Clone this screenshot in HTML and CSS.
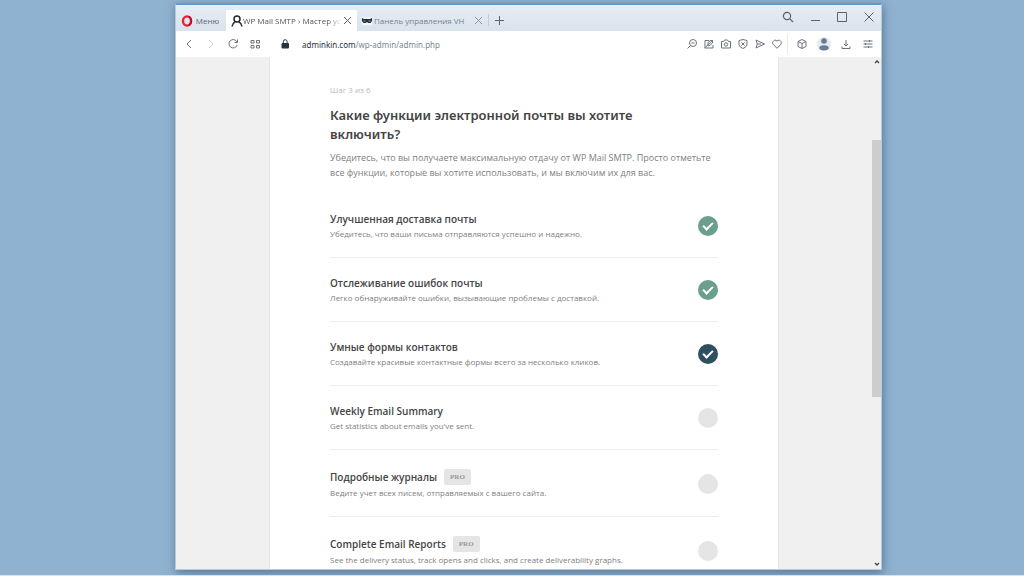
FILE: index.html
```
<!DOCTYPE html>
<html lang="ru">
<head>
<meta charset="utf-8">
<title>WP Mail SMTP › Мастер установки</title>
<link rel="stylesheet" href="styles.css">
</head>
<body>
<div class="window">
  <header class="tabbar">
    <button class="menu" type="button">
      <svg width="12" height="12" viewBox="0 0 12 12"><ellipse cx="6" cy="6" rx="4" ry="4.600" fill="none" stroke="#ee1f35" stroke-width="2.400"/><path d="M7.500 1.600c3.800 1.400 3.800 7.400 0 8.800" fill="none" stroke="#b3122a" stroke-width="1.600"/></svg>
      <span>Меню</span>
    </button>
    <div class="tab tab-active">
      <svg width="12" height="12" viewBox="0 0 12 12" fill="none" stroke="#202830" stroke-width="1.500"><circle cx="6" cy="4" r="3"/><path d="M1 11.500c.3-2.200 1.400-3.600 3.200-4.800M11 11.500c-.3-2.200-1.400-3.600-3.200-4.800"/></svg>
      <span class="tab-title fade">WP Mail SMTP › Мастер ус</span>
      <button class="close" type="button" aria-label="Закрыть"><svg width="9" height="9" viewBox="0 0 9 9" stroke="#59636d" stroke-width="1"><path d="M1 1l7 7M8 1l-7 7"/></svg></button>
    </div>
    <div class="tab tab-rest">
      <svg width="10" height="10" viewBox="0 0 10 10"><path d="M0 1h10v8H0z" fill="#f4f7fa"/><path d="M0 2l2 1h6l2-1v3L8.500 7H6.300L5 6 3.700 7H1.500L0 5z" fill="#1c3040"/><path d="M1.500 5h2M6.500 5h2" stroke="#8fb0c4"/></svg>
      <span class="tab-title">Панель управления VH</span>
      <button class="close" type="button" aria-label="Закрыть"><svg width="9" height="9" viewBox="0 0 9 9" stroke="#8b959f" stroke-width="1"><path d="M1 1l7 7M8 1l-7 7"/></svg></button>
    </div>
    <button class="new-tab" type="button" aria-label="Новая вкладка"><svg width="9" height="9" viewBox="0 0 9 9" stroke="#59636d"><path d="M4.500 0v9M0 4.500h9"/></svg></button>
    <div class="controls">
      <button type="button" aria-label="Поиск"><svg width="12" height="12" viewBox="0 0 12 12" fill="none" stroke="#59636d" stroke-width="1.200"><circle cx="5" cy="5" r="3.600"/><path d="M7.800 7.800L11 11"/></svg></button>
      <button type="button" aria-label="Свернуть"><svg width="12" height="12" viewBox="0 0 12 12" stroke="#59636d"><path d="M2 9.500h9"/></svg></button>
      <button type="button" aria-label="Развернуть"><svg width="12" height="12" viewBox="0 0 12 12" fill="none" stroke="#59636d"><path d="M1.500 1.500h9v9h-9z"/></svg></button>
      <button type="button" aria-label="Закрыть окно"><svg width="12" height="12" viewBox="0 0 12 12" stroke="#59636d"><path d="M1.500 1.500l9 9M10.500 1.500l-9 9"/></svg></button>
    </div>
  </header>

  <nav class="toolbar">
    <div class="nav-buttons">
      <button type="button" aria-label="Назад"><svg width="12" height="12" viewBox="0 0 12 12"><path d="M8 2L4 6l4 4"/></svg></button>
      <button type="button" aria-label="Вперёд" disabled><svg width="12" height="12" viewBox="0 0 12 12"><path d="M4 2l4 4-4 4"/></svg></button>
      <button type="button" aria-label="Обновить"><svg width="12" height="12" viewBox="0 0 12 12"><path d="M10 4A4.200 4.200 0 1 0 10.200 7M10.500 1.500v3h-3"/></svg></button>
      <button type="button" aria-label="Экспресс-панель"><svg width="12" height="12" viewBox="0 0 12 12"><path d="M2 2.500h3v2.500H2zM7.500 2.500h3v2.500h-3zM2 7.500h3V10H2zM7.500 7.500h3V10h-3z"/></svg></button>
    </div>
    <svg class="lock" width="8" height="10" viewBox="0 0 8 10"><path d="M1 4.500h6.500v4.500H1z" fill="#27333d" stroke="#27333d"/><path d="M2.300 4V2.600a1.900 1.900 0 0 1 3.800 0V4" fill="none" stroke="#27333d" stroke-width="1"/></svg>
    <button class="address" type="button">adminkin.com<span class="path">/wp-admin/admin.php</span></button>
    <div class="actions">
      <button type="button" aria-label="Масштаб"><svg width="12" height="12" viewBox="0 0 12 12"><circle cx="7" cy="5" r="3.500"/><path d="M4.500 7.500L1.500 10.500M5.500 5h3"/></svg></button>
      <button type="button" aria-label="Правка"><svg width="12" height="12" viewBox="0 0 12 12"><path d="M6 2.500H2v7.500h8V7M1.500 10L10 2M5 8V4.500l3-2.500 2 2-2.500 3z"/></svg></button>
      <button type="button" aria-label="Снимок"><svg width="12" height="12" viewBox="0 0 12 12"><path d="M1.500 3.500h2l1-1.500h3l1 1.500h2v6.500h-9z"/><circle cx="6" cy="6.500" r="1.700"/></svg></button>
      <button type="button" aria-label="Блокировка"><svg width="12" height="12" viewBox="0 0 12 12"><path d="M2 2.500q4-2 8 0V7q-1 2.500-4 3.500Q3 9.500 2 7zM4.500 4.500l3 3M7.500 4.500l-3 3"/></svg></button>
      <button type="button" aria-label="Отправить"><svg width="12" height="12" viewBox="0 0 12 12"><path d="M2 2l8.500 4L2 10l1.300-4zM3.500 6H7"/></svg></button>
      <button type="button" aria-label="Избранное"><svg width="12" height="12" viewBox="0 0 12 12"><path d="M6 10.300L2.300 6.500C.2 3.800 4 .4 6 3.200 8 .4 11.800 3.800 9.700 6.500z"/></svg></button>
    </div>
    <div class="extras">
      <button type="button" aria-label="Расширения"><svg width="12" height="12" viewBox="0 0 12 12"><path d="M6 1.500l4 2v5l-4 2-4-2v-5zM2 3.500l4 2 4-2M6 5.500v5"/></svg></button>
      <button type="button" aria-label="Профиль"><svg width="14" height="14" viewBox="0 0 14 14"><circle cx="7" cy="7" r="7" fill="#e3eaf1" stroke="none"/><circle cx="7" cy="4" r="2.800" fill="#687d92" stroke="none"/><ellipse cx="7" cy="10.800" rx="4.700" ry="2.600" fill="#687d92" stroke="none"/></svg></button>
      <button type="button" aria-label="Загрузки"><svg width="12" height="12" viewBox="0 0 12 12"><path d="M6 2v6M4 6l2 2 2-2M2 8.500v2h8v-2"/></svg></button>
      <button type="button" aria-label="Настройка"><svg width="12" height="12" viewBox="0 0 12 12"><path d="M1.500 3h9M1.500 6h9M1.500 9h9M7.500 2v2M3.500 5v2M6.500 8v2"/></svg></button>
    </div>
  </nav>

  <div class="viewport">
    <main class="card">
      <p class="step">Шаг 3 из 6</p>
      <h1>Какие функции электронной почты вы хотите включить?</h1>
      <p class="intro">Убедитесь, что вы получаете максимальную отдачу от WP Mail SMTP. Просто отметьте все функции, которые вы хотите использовать, и мы включим их для вас.</p>
      <form class="features">
        <label class="feature">
          <span class="text"><span class="name">Улучшенная доставка почты</span><span class="about">Убедитесь, что ваши письма отправляются успешно и надежно.</span></span>
          <input class="check locked" type="checkbox" checked>
        </label>
        <label class="feature">
          <span class="text"><span class="name">Отслеживание ошибок почты</span><span class="about">Легко обнаруживайте ошибки, вызывающие проблемы с доставкой.</span></span>
          <input class="check locked" type="checkbox" checked>
        </label>
        <label class="feature">
          <span class="text"><span class="name">Умные формы контактов</span><span class="about">Создавайте красивые контактные формы всего за несколько кликов.</span></span>
          <input class="check" type="checkbox" checked>
        </label>
        <label class="feature">
          <span class="text"><span class="name">Weekly Email Summary</span><span class="about">Get statistics about emails you've sent.</span></span>
          <input class="check" type="checkbox">
        </label>
        <label class="feature">
          <span class="text"><span class="name with-badge">Подробные журналы <span class="pro">PRO</span></span><span class="about">Ведите учет всех писем, отправляемых с вашего сайта.</span></span>
          <input class="check" type="checkbox">
        </label>
        <label class="feature">
          <span class="text"><span class="name with-badge">Complete Email Reports <span class="pro">PRO</span></span><span class="about">See the delivery status, track opens and clicks, and create deliverability graphs.</span></span>
          <input class="check" type="checkbox">
        </label>
      </form>
    </main>
    <div class="scrollbar">
      <svg width="6" height="5" viewBox="0 0 6 5"><path d="M1 4l2-2 2 2" fill="none" stroke="#444" stroke-width="1.300"/></svg>
      <div class="track"><div class="thumb"></div></div>
      <svg width="6" height="5" viewBox="0 0 6 5"><path d="M1 1l2 2 2-2" fill="none" stroke="#444" stroke-width="1.300"/></svg>
    </div>
  </div>
</div>
</body>
</html>
```
FILE: styles.css
```
*, *::before { box-sizing: border-box; }

body {
  margin: 0;
  height: 100vh;
  padding: 3px 142px 5px 175px;
  overflow: hidden;
  background: #90b2d1;
  border-bottom: 1px solid #d5e3ef;
  font-family: "Open Sans", "Noto Sans", sans-serif;
  font-size: 8px;
  color: #444;
}

button {
  display: flex;
  align-items: center;
  justify-content: center;
  padding: 0;
  border: 0;
  background: none;
  font: inherit;
  color: inherit;
}

svg { flex: none; }

.window {
  display: flex;
  flex-direction: column;
  height: 100%;
  border: 1px solid #b4cadd;
  border-top: 2px solid #5b9bd0;
  background: #fff;
  box-shadow: 1px 3px 9px rgba(30, 60, 90, 0.5);
}

.tabbar {
  display: flex;
  flex: none;
  height: 26px;
  padding-top: 5px;
  background: linear-gradient(#e6edf5, #dae2eb);
}

.menu {
  gap: 3px;
  width: 50px;
  padding-right: 2px;
  color: #5d6770;
}

.tab {
  display: flex;
  align-items: center;
  width: 131px;
  padding: 0 4px 0 5px;
}

.tab-active { background: #fff; color: #4c565f; }

.tab-rest {
  gap: 2px;
  color: #78828c;
}

.tab-title {
  flex: 1;
  overflow: hidden;
  white-space: nowrap;
}

.fade { mask-image: linear-gradient(90deg, #000 85%, transparent); }

.close { width: 11px; height: 12px; }

.new-tab {
  width: 22px;
  height: 12px;
  margin-top: 4px;
  border-left: 1px solid #c3ccd5;
}

.controls {
  display: flex;
  gap: 15px;
  height: 14px;
  margin-left: auto;
  padding-right: 6px;
}

.toolbar {
  display: flex;
  flex: none;
  align-items: center;
  height: 26px;
  padding: 0 5px;
}

.toolbar button svg {
  fill: none;
  stroke: #6a747e;
  stroke-width: 1;
}

.toolbar button:disabled svg { stroke: #ccd2d7; }

.nav-buttons { display: flex; gap: 6px; }
.nav-buttons button { width: 16px; height: 16px; }
.lock { margin: 0 13px 0 18px; }

.toolbar .address {
  font-family: "Noto Sans", sans-serif;
  color: #27333d;
}

.path { color: #7b8791; }

.actions {
  display: flex;
  gap: 1px;
  margin-left: auto;
  padding-right: 2px;
  border-right: 1px solid #e8ebee;
}

.actions button { width: 16px; height: 20px; }

.extras {
  display: flex;
  gap: 6px;
  padding-left: 6px;
}

.extras button { width: 16px; height: 16px; }

.viewport {
  display: flex;
  flex: 1;
  min-height: 0;
  overflow: hidden;
  background: #f0f0f0;
}

.card {
  flex: 1;
  align-self: flex-start;
  margin: 0 93px;
  padding: 27px 60px;
  border: solid #e6e6e6;
  border-width: 0 1px;
  background: #fff;
}

.step {
  margin: 0 0 10px;
  line-height: 12px;
  color: #b8b8b8;
}

h1 {
  margin: 0 0 6px;
  padding-right: 24px;
  font-family: "Noto Sans", sans-serif;
  font-size: 13px;
  line-height: 19px;
  font-weight: 600;
}

.intro {
  margin: 0 0 14px;
  font-size: 9px;
  line-height: 15px;
  color: #808080;
}

.feature {
  display: flex;
  align-items: center;
  justify-content: space-between;
  padding: 17px 0 16px;
  border-bottom: 1px solid #eee;
}

.text { display: block; }

.name {
  display: flex;
  align-items: center;
  gap: 7px;
  font-size: 10px;
  font-weight: 600;
  line-height: 16px;
}

.with-badge { min-height: 19px; }

.about {
  display: block;
  line-height: 14px;
  color: #808080;
}

.pro {
  padding: 0 6px;
  border-radius: 2px;
  background: #e5e5e5;
  font-family: "Liberation Serif", serif;
  font-size: 7px;
  font-weight: 700;
  color: #999;
}

.check {
  appearance: none;
  display: flex;
  flex: none;
  align-items: center;
  justify-content: center;
  width: 20px;
  height: 20px;
  margin: 0;
  border-radius: 50%;
  background: #e5e5e5;
}

.check:checked { background: #2d4f60; }
.check.locked:checked { background: #6a9f8b; }

.check:checked::before {
  content: "";
  width: 10px;
  height: 6px;
  margin-bottom: 2px;
  border: solid #fff;
  border-width: 0 0 2px 2px;
  transform: rotate(-45deg);
}

.scrollbar {
  display: flex;
  flex: none;
  flex-direction: column;
  align-items: center;
  width: 9px;
  padding: 2px 0;
}

.track {
  flex: 1;
  width: 100%;
  padding-top: 76px;
}

.thumb {
  height: 61%;
  background: #cdcdcd;
}
```
